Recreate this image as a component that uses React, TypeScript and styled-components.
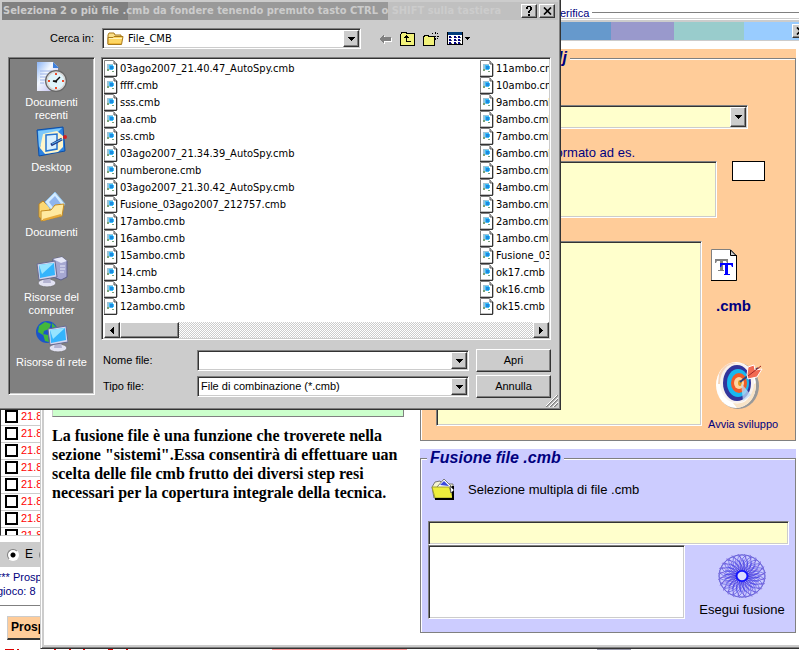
import React from 'react';
import styled, { createGlobalStyle, css } from 'styled-components';

const GlobalStyle = createGlobalStyle`
  *, *::before, *::after { box-sizing: border-box; }
  html, body { margin: 0; padding: 0; background: #fff; }
  body { font-family: "Liberation Sans", Arial, sans-serif; font-size: 11px; line-height: 13px; color: #000; }
  button, input, select, textarea { font: inherit; color: inherit; margin: 0; border-radius: 0; outline: none; }
  svg { display: block; flex: none; }
`;

const sunken = css`
  border: 1px solid;
  border-color: #808080 #fff #fff #808080;
  box-shadow: inset 1px 1px 0 #333, inset -1px -1px 0 #ccc;
`;
const raised = css`
  border: 1px solid;
  border-color: #fff #333 #333 #fff;
  box-shadow: inset -1px -1px 0 #808080;
  background: #ccc;
`;

const Desktop = styled.main`
  position: relative;
  min-height: 100vh;
  overflow: hidden;
  background: #fff;
  display: flex;
  flex-direction: column;
`;

/* ---------- rear window ---------- */
const RearHeading = styled.div`
  display: flex;
  align-items: center;
  gap: 3px;
  height: 17px;
  padding-top: 9px;
  margin-left: calc(100% - 239px);
  color: #000080;
`;
const Rule = styled.span`
  flex: 1;
  height: 2px;
  border-top: 1px solid #808080;
  background: #fff;
`;
const RearLower = styled.section`
  margin-top: auto;
  display: flex;
  flex-direction: column;
`;
const DrawClip = styled.div`
  height: 128px;
  overflow: hidden;
  border-left: 1px solid #333;
  border-bottom: 1px solid #ccc;
`;
const DrawTable = styled.table`
  width: 100%;
  border-collapse: collapse;
  color: #f00;
`;
const DrawCell = styled.td`
  height: 17px;
  padding: 0 0 0 4px;
  border-bottom: 1px solid #ccc;
`;
const DrawLabel = styled.label`
  display: flex;
  align-items: center;
  gap: 3px;
  height: 16px;
`;
const Tick = styled.input`
  appearance: none;
  width: 13px;
  height: 13px;
  border: 2px solid #000;
  background: #fff;
`;
const ChoiceBar = styled.div`
  display: flex;
  align-items: center;
  height: 25px;
  margin-top: 6px;
  padding-left: 7px;
  gap: 6px;
  background: #ccc;
  font-size: 12px;
`;
const ChoiceLabel = styled.label`
  display: flex;
  align-items: center;
  gap: 6px;
`;
const Radio = styled.input`
  appearance: none;
  width: 12px;
  height: 12px;
  border: 1px solid;
  border-color: #808080 #fff #fff #808080;
  border-radius: 50%;
  background: #fff;
  &:checked { background: radial-gradient(#000 2px, #fff 3px); }
`;
const Prospect = styled.p`
  margin: 3px 0 0 -3px;
  padding-bottom: 7px;
  line-height: 14px;
  color: #000080;
  border-bottom: 1px solid #808080;
  white-space: pre-line;
`;
const ProspectTab = styled.button`
  margin: 10px 0 0 7px;
  width: 80px;
  height: 24px;
  padding: 0 3px;
  border: 1px solid;
  border-color: #ccc #333 #333 #ccc;
  border-bottom-width: 2px;
  background: #fc9;
  font-size: 12px;
  font-weight: bold;
  text-align: left;
`;
const Footer = styled.div`
  height: 10px;
  padding: 9px 0 0 5px;
`;

/* ---------- child window ---------- */
const ChildWindow = styled.section`
  position: absolute;
  z-index: 1;
  left: 40px;
  right: 0;
  top: 18px;
  padding: 1px 0 0 1px;
  background: #fff;
  border: 0 solid #ccc;
  border-width: 1px 0 0 1px;
  border-bottom: 1px solid #333;
`;
const ChildFrame = styled.div`
  border: 0 solid #ccc;
  border-width: 2px 0 2px 2px;
  box-shadow: 0 1px 0 #808080;
  margin-bottom: 1px;
`;
const BandRow = styled.div`
  display: flex;
  height: 19px;
  border-bottom: 1px solid #ccc;
  overflow: hidden;
`;
const Band = styled.div<{ $color: string; $width?: number }>`
  flex: ${p => (p.$width ? `0 0 ${p.$width}px` : '1')};
  background: ${p => p.$color};
  display: flex;
  align-items: center;
  justify-content: flex-end;
`;
const SmallButton = styled.button<{ $shift?: number }>`
  ${raised}
  display: flex;
  align-items: center;
  justify-content: center;
  flex: none;
  width: 16px;
  height: 14px;
  padding: 0;
  margin-right: ${p => p.$shift || 0}px;
`;
const ChildBody = styled.div`
  display: grid;
  grid-template-columns: 1fr 1fr;
  padding: 8px 3px 12px 0;
`;
const Notes = styled.div`
  min-width: 0;
  padding: 0 16px 0 8px;
`;
const NoteBox = styled.div`
  height: 368px;
  background: #cfc;
  border: 1px solid #808080;
  border-left-color: #ccc;
`;
const NoteText = styled.p`
  margin: 9px 0 0;
  width: max-content;
  font: bold 16px/19px "Liberation Serif", "Times New Roman", serif;
  white-space: pre-line;
`;
const Panels = styled.div`
  display: flex;
  flex-direction: column;
  gap: 8px;
`;
const Panel = styled.div<{ $color: string }>`
  background: ${p => p.$color};
`;
const Group = styled.fieldset`
  margin: 0;
  padding: 0;
  min-width: 0;
  border: 1px solid #808080;
  box-shadow: inset 1px 1px 0 #fff;
`;
const GroupLegend = styled.legend<{ $color: string }>`
  margin-left: 6px;
  padding: 0 3px;
  height: 18px;
  background: ${p => p.$color};
  font: italic bold 16px/18px "Liberation Sans", Arial, sans-serif;
  color: #000080;
`;
const LegendEnd = styled.span`
  display: block;
  width: 137px;
  text-align: right;
`;
const PathBody = styled.div`
  padding: 38px 0 9px 15px;
  color: #000080;
`;
const FormatLabel = styled.label`
  display: block;
  width: 199px;
  margin-top: 16px;
  line-height: 16px;
  font-size: 13px;
  text-align: right;
`;
const FieldRow = styled.div<{ $gap: number; $top?: number }>`
  display: flex;
  align-items: flex-start;
  gap: ${p => p.$gap}px;
  margin-top: ${p => p.$top || 0}px;
`;
const TextArea = styled.textarea<{ $w: number; $h: number; $tint?: boolean }>`
  ${sunken}
  display: block;
  resize: none;
  width: ${p => p.$w}px;
  height: ${p => p.$h}px;
  padding: 2px 4px;
  background: ${p => (p.$tint ? '#ffc' : '#fff')};
`;
const CodeInput = styled.input`
  width: 33px;
  height: 20px;
  padding: 0 2px;
  border: 1px solid #000;
  background: #fff;
`;
const SideTools = styled.div`
  display: flex;
  flex-direction: column;
  align-items: flex-start;
  padding-top: 8px;
`;
const Extension = styled.span`
  margin: 16px 0 45px 8px;
  font-size: 15px;
  line-height: 18px;
  font-weight: bold;
`;
const DrawingButton = styled.button<{ $inset: number }>`
  display: flex;
  flex-direction: column;
  gap: 7px;
  padding: 0;
  border: 0;
  background: none;
  line-height: 14px;
  > svg { margin-left: ${p => p.$inset}px; }
`;
const MergeBody = styled.div`
  padding: 10px 6px 13px 7px;
`;
const PickButton = styled.button`
  display: flex;
  align-items: center;
  gap: 12px;
  height: 24px;
  padding: 0 0 0 3px;
  margin-bottom: 20px;
  border: 0;
  background: none;
  font-size: 13px;
`;
const PathInput = styled.input`
  ${sunken}
  display: block;
  width: 100%;
  height: 24px;
  padding: 0 4px;
  background: #ffc;
`;
const MergeButton = styled.button`
  flex: 1;
  display: flex;
  flex-direction: column;
  align-items: center;
  gap: 4px;
  padding: 9px 0 0 10px;
  border: 0;
  background: none;
  font-size: 13px;
  line-height: 16px;
  white-space: nowrap;
`;

/* ---------- file dialog ---------- */
const Dialog = styled.section`
  position: absolute;
  z-index: 2;
  left: 0;
  top: 0;
  right: 238px;
  padding: 2px 1px 11px 2px;
  background: #ccc;
  border: 0 solid #333;
  border-width: 0 1px 1px 0;
  box-shadow: inset -1px -1px 0 #808080;
`;
const TitleBar = styled.header`
  display: flex;
  align-items: center;
  gap: 2px;
  height: 18px;
  margin-right: 1px;
  padding: 0 3px 0 1px;
  color: #ccc;
  background: linear-gradient(90deg, #808080 126px, #999 126px, #999 386px, #c0c0c0 386px);
`;
const Title = styled.h1`
  flex: 1;
  min-width: 0;
  margin: 0;
  font: bold 11px/18px "DejaVu Sans Condensed", Tahoma, sans-serif;
  white-space: nowrap;
`;
const LookRow = styled.div`
  display: flex;
  align-items: center;
  margin-top: 8px;
`;
const LookLabel = styled.label`
  width: 92px;
  margin-right: 8px;
  text-align: right;
`;
const Combo = styled.div<{ $w?: number; $h?: number; $tint?: boolean }>`
  ${sunken}
  display: flex;
  align-items: center;
  width: ${p => (p.$w ? `${p.$w}px` : '100%')};
  height: ${p => p.$h || 21}px;
  padding: 1px 1px 1px 2px;
  background: ${p => (p.$tint ? '#ffc' : '#fff')};
`;
const comboText = css`
  appearance: none;
  flex: 1;
  min-width: 0;
  height: 100%;
  padding: 0 0 0 1px;
  border: 0;
  background: transparent;
`;
const ComboSelect = styled.select`
  ${comboText}
`;
const FolderSelect = styled.select`
  ${comboText}
  padding-left: 4px;
  font-family: "DejaVu Sans Condensed", Tahoma, sans-serif;
`;
const ComboInput = styled.input`
  ${comboText}
`;
const LookIcon = styled.span`
  padding-left: 2px;
`;
const ArrowBox = styled.span`
  ${raised}
  display: flex;
  align-items: center;
  justify-content: center;
  flex: none;
  width: 16px;
  height: 100%;
`;
const Tools = styled.div`
  display: flex;
  gap: 7px;
  margin-left: 16px;
`;
const ToolButton = styled.button`
  display: block;
  padding: 0;
  border: 0;
  background: none;
`;
const DialogMain = styled.div`
  display: flex;
  align-items: flex-start;
  gap: 6px;
  margin-top: 8px;
  padding: 0 8px 0 6px;
`;
const Places = styled.nav`
  ${sunken}
  flex: none;
  display: flex;
  flex-direction: column;
  width: 87px;
  height: 338px;
  padding-top: 3px;
  background: #808080;
`;
const Place = styled.button`
  display: flex;
  flex-direction: column;
  align-items: center;
  gap: 3px;
  height: 65px;
  padding: 0;
  border: 0;
  background: none;
  color: #fff;
  line-height: 13px;
  white-space: pre-line;
`;
const DialogWork = styled.div`
  flex: 1;
  min-width: 0;
`;
const ListFrame = styled.div`
  ${sunken}
  padding: 2px 1px 1px 2px;
  background: #fff;
`;
const FileList = styled.ul`
  display: grid;
  grid-template-rows: repeat(15, 17px);
  grid-auto-flow: column;
  grid-template-columns: 376px 1fr;
  height: 262px;
  margin: 0;
  padding: 0;
  list-style: none;
  overflow: hidden;
  font: 11px/17px "DejaVu Sans Condensed", Tahoma, sans-serif;
`;
const FileItem = styled.li`
  display: flex;
  align-items: center;
  gap: 2px;
  min-width: 0;
  white-space: nowrap;
`;
const ScrollTrack = styled.div`
  display: flex;
  height: 16px;
  background: repeating-conic-gradient(#ccc 0 25%, #fff 0 50%) 0 0 / 2px 2px;
`;
const ScrollArrow = styled.button`
  ${raised}
  display: flex;
  align-items: center;
  justify-content: center;
  width: 16px;
  padding: 0;
`;
const ScrollThumb = styled.span`
  ${raised}
  width: 59px;
  margin-right: auto;
`;
const NameForm = styled.form`
  display: grid;
  grid-template-columns: 94px 1fr 75px;
  grid-auto-rows: 23px;
  align-items: center;
  row-gap: 3px;
  margin-top: 9px;
  padding-left: 2px;
`;
const DialogButton = styled.button`
  ${raised}
  height: 23px;
  padding: 0;
`;
const ComboCell = styled.div`
  padding-right: 7px;
`;
const Grip = styled.svg`
  position: absolute;
  right: 2px;
  bottom: 2px;
`;

/* ---------- drawings ---------- */
const Down = () => (
  <svg width="7" height="4" viewBox="0 0 7 4" shapeRendering="crispEdges"><path d="M0 0h7v1H6v1H5v1H4v1H3V3H2V2H1V1H0z" /></svg>
);
const Side = ({ flip }: { flip?: boolean }) => (
  <svg width="4" height="7" viewBox="0 0 4 7" shapeRendering="crispEdges"><path d={flip ? 'M0 0h1v1h1v1h1v1h1v1H3v1H2v1H1v1H0z' : 'M4 0H3v1H2v1H1v1H0v1h1v1h1v1h1v1h1z'} /></svg>
);
const Cross = () => (
  <svg width="9" height="8" viewBox="0 0 9 8"><path d="M1 0.5 8 7.5M8 0.5 1 7.5" stroke="#000" strokeWidth="1.7" /></svg>
);
const Question = () => (
  <svg width="8" height="10" viewBox="0 0 8 10" shapeRendering="crispEdges"><path d="M1 1h1V0h4v1h1v3H6v1H5v2H3V5h1V4h1V1H3v2H1zM3 8h2v2H3z" /></svg>
);
const FileIcon = () => (
  <svg width="14" height="17" viewBox="0 0 14 17">
    <path d="M.5.5h9l3.500 3.500v12H.5z" fill="#fff" stroke="#808080" />
    <path d="M10 1v3h3" fill="#ccc" stroke="#555" />
    <path d="M12.500 4v12.500H0" fill="none" stroke="#333" />
    <path d="M3 4h6v6H3z" fill="#9cc4d8" />
    <path d="M5 5h4v1h1v3H9v1H6V9H5z" fill="#3ac0fa" />
    <path d="M6 6h3v3H6z" fill="#1e88dd" />
    <path d="M3 11h2V9H3zM8 11h2v1H8z" fill="#7aa37a" />
  </svg>
);
const FolderIcon = () => (
  <svg width="17" height="14" viewBox="0 0 17 14">
    <path d="M1 12V3l1-2h5l1 2h6v3" fill="#fbe08a" stroke="#a8791b" />
    <path d="M1 12.500V5.500h5l1-1h9l-1.500 8z" fill="#fdd663" stroke="#a8791b" />
    <path d="M2 6.500h13" stroke="#fff3bd" />
    <path d="M2 11.500h12" stroke="#f0b93a" />
  </svg>
);
const BackArrow = () => (
  <svg width="16" height="16" viewBox="0 0 16 16" shapeRendering="crispEdges">
    <path d="M3 9 8 4v3h7v4H8v3z" fill="#fff" />
    <path d="M2 8 7 3v3h7v4H7v3z" fill="#808080" />
  </svg>
);
const UpFolder = () => (
  <svg width="16" height="16" viewBox="0 0 16 16" shapeRendering="crispEdges">
    <path d="M.5 14.500v-11l1-1v-1h5v1h8v12z" fill="#f2f27a" stroke="#000" />
    <path d="M4 6h5v1H4zM5 5h3v1H5zM6 4h1v7H6zM6 10h5v1H6z" fill="#000" />
  </svg>
);
const NewFolder = () => (
  <svg width="17" height="16" viewBox="0 0 17 16" shapeRendering="crispEdges">
    <path d="M.5 14.500v-9h1v-1h4v1h6v9z" fill="#f2f27a" stroke="#000" />
    <path d="M12 1v2M12 7v2M8 5h2M14 5h2M9 2l1 1M14 3l1-1M14 7l1 1M12 5h1" stroke="#000" />
  </svg>
);
const ViewIcon = () => (
  <svg width="24" height="16" viewBox="0 0 24 16" shapeRendering="crispEdges">
    <path d="M.5 1.500h15v12H.5z" fill="#fff" stroke="#000" />
    <path d="M1 1h14v3H1z" fill="#003a7a" />
    <path d="M2 5h2v2H2zM7 5h2v2H7zM11 5h2v2h-2zM2 8h2v2H2zM7 8h2v2H7zM11 8h2v2h-2zM2 11h2v2H2zM7 11h2v2H7zM11 11h2v2h-2z" fill="#000080" />
    <path d="M4 6h1v1H4zM9 6h1v1H9zM13 6h1v1h-1zM4 9h1v1H4zM9 9h1v1H9zM13 9h1v1h-1zM4 12h1v1H4zM9 12h1v1H9zM13 12h1v1h-1z" fill="#555" />
    <path d="M18 6h5v1h-1v1h-1v1h-1V8h-1V7h-1z" />
  </svg>
);
const RecentIcon = () => (
  <svg width="32" height="32" viewBox="0 0 32 32">
    <defs><linearGradient id="paper" x2="1" y2="1"><stop stopColor="#8ab4f6" /><stop offset=".4" stopColor="#f3f8ff" /><stop offset="1" stopColor="#b9b4ee" /></linearGradient></defs>
    <path d="M1 1h16l5 5v24H1z" fill="url(#paper)" />
    <path d="M17 1v6h6z" fill="#3d7fdc" />
    <path d="M4 10h12M4 13h8M4 16h6M4 19h5M4 22h4" stroke="#9cb2e8" />
    <circle cx="20" cy="20" r="10" fill="#dff4fb" stroke="#666" strokeWidth="2" />
    <circle cx="20" cy="20" r="9" fill="none" stroke="#d8d8d8" strokeWidth="1.500" />
    <path d="M20 20l4-4M20 20h-3l4 1" stroke="#111" strokeWidth="1.500" />
    <path d="M20 12v2M20 26v2M12 20h2M26 20h2" stroke="#f04a2a" strokeWidth="2" />
  </svg>
);
const DesktopIcon = () => (
  <svg width="32" height="32" viewBox="0 0 32 32">
    <path d="M1 4 27 1l2 24-26 5z" fill="#2d83e2" stroke="#0c4fa8" />
    <path d="M2 5 26 2l-6 6-9 0L3 22z" fill="#7cc8fa" />
    <path d="M7 8l14-3 6 5v11l-5 5-13 2-5-6z" fill="#fff6c9" />
    <path d="M10 9l11-1v15l-11 2z" fill="#d9f1ff" stroke="#2472ce" strokeWidth="1.500" />
    <path d="M15 19l11-6" stroke="#223a86" strokeWidth="3" />
    <path d="M16 18l10-5" stroke="#5cbaf4" />
    <circle cx="29" cy="11" r="2" fill="#d41f1f" />
  </svg>
);
const DocumentsIcon = () => (
  <svg width="32" height="32" viewBox="0 0 32 32">
    <path d="M3 13l4-3 3 3 5 3-7 14-5-4z" fill="#fbd873" stroke="#b98323" />
    <path d="M9 11 19 1l10 12-9 12z" fill="#d2ebff" stroke="#8fc0ea" />
    <path d="M13 11l6-6 6 8-6 6z" fill="#8fb5ee" />
    <path d="M5 30V20l10-1 4-5 9-1-2 12z" fill="#ffe9a0" stroke="#c58b21" />
    <path d="M7 29 25 24" stroke="#e6a93a" strokeWidth="2" />
  </svg>
);
const Screen = ({ x, y }: { x: number; y: number }) => (
  <g transform={`translate(${x} ${y})`}>
    <ellipse cx="11" cy="23" rx="9" ry="4" fill="#e2e2f2" stroke="#777" />
    <path d="M8 17h6l1 6H7z" fill="#b4b4d2" />
    <path d="M1 4 19 1l2 16-18 3z" fill="#d4d6ee" stroke="#676a90" />
    <path d="M3 5 18 3l1 12-15 3z" fill="#34b4fc" />
    <path d="M3 5 18 3 6 14z" fill="#96e4ff" />
  </g>
);
const ComputerIcon = () => (
  <svg width="32" height="32" viewBox="0 0 32 32">
    <path d="M17 3l9-2 5 4v16l-6 3-8-3z" fill="#a6a8d2" stroke="#5b5d88" />
    <path d="M17 3l9-2 5 4-6 2z" fill="#e6e8f8" />
    <path d="M24 10h5M24 13h5M24 16h4" stroke="#e8eafa" />
    <Screen x={0} y={4} />
  </svg>
);
const NetworkIcon = () => (
  <svg width="32" height="32" viewBox="0 0 32 32">
    <circle cx="11" cy="11" r="11" fill="#1b55c8" />
    <path d="M3 5l6-4 6 2-2 5-5 2-1 4-5-3zM7 13l5 1 1 7-4-1zM16 2l4 4-4 1z" fill="#43b73a" />
    <Screen x={11} y={4} />
  </svg>
);
const FontFile = () => (
  <svg width="27" height="32" viewBox="0 0 27 32">
    <path d="M.5.5h19l6 6v25H.5z" fill="#fff" stroke="#808080" />
    <path d="M19.500 1v5.500H25z" fill="#ccc" stroke="#000" />
    <path d="M25.500 6v25.500H0" fill="none" stroke="#000" />
    <path d="M4 10h13v4h-1l-1-2h-3v9h1v1H7v-1h2v-9H6l-1 2H4z" fill="#808080" />
    <path d="M9 14h13v4h-1l-1-2h-3v9h2v1h-6v-1h1v-9h-3l-1 2H9z" fill="#00f" />
  </svg>
);
const TargetIcon = () => (
  <svg width="48" height="50" viewBox="0 0 48 50">
    <ellipse cx="22" cy="26" rx="21" ry="23" fill="#999" />
    <ellipse cx="20" cy="25" rx="20" ry="23" fill="#fff" />
    <path d="M3 14Q9 1 21 3l5 9H11L8 24H2z" fill="#f6d5ba" />
    <path d="M17 43q18 3 19-18l4-2q0 22-19 25z" fill="#f8e4c8" />
    <ellipse cx="21" cy="23" rx="17" ry="20" fill="#f7f1ee" />
    <ellipse cx="21" cy="23" rx="14" ry="18" fill="#31349b" />
    <ellipse cx="22" cy="23" rx="11" ry="14" fill="#18b7ee" />
    <ellipse cx="23" cy="23" rx="8" ry="10" fill="#f25a27" />
    <ellipse cx="23" cy="23" rx="5" ry="6" fill="#ffd6a0" />
    <ellipse cx="24" cy="23" rx="2" ry="3" fill="#e59a20" />
    <path d="M25 23 35 35l-8 6z" fill="#bcd9f5" opacity=".75" />
    <path d="M24 22 42 8" stroke="#30457e" strokeWidth="2" />
    <path d="M31 15l1-8 6-2 1 5 7-1-5 8-9 2z" fill="#f26a52" stroke="#fff" />
    <path d="M32 16 45 6" stroke="#a02525" />
  </svg>
);
const OpenFolder = () => (
  <svg width="25" height="23" viewBox="0 0 25 23">
    <path d="M3 20 1 9l3-5 5-1 3 3h10v14z" fill="#f4f4d0" stroke="#777" />
    <path d="M6 9 13 1l9 9-4 5z" fill="#fff" stroke="#777" />
    <path d="M9 7l4-4 5 5z" fill="#3b49dc" />
    <path d="M1 9h17l4 11H4z" fill="#eeee3c" stroke="#a0a030" />
    <path d="M4 21h18V8" fill="none" stroke="#000" strokeWidth="2" />
    <path d="M19 8l4 4-3 3z" fill="#fff" stroke="#555" />
  </svg>
);
const petals = Array.from({ length: 24 }, (_, i) => i * 15);
const Rosette = () => (
  <svg width="48" height="44" viewBox="-24 -22 48 44">
    <g fill="none" stroke="#4a46d8" strokeWidth=".6" transform="scale(1 .92)">
      {petals.map(a => <ellipse key={a} cx="14" cy="0" rx="9" ry="5" transform={`rotate(${a})`} />)}
      {petals.map(a => <path key={`s${a}`} d="M5 0Q11 1 15 6T23 8" stroke="#6a4ad8" transform={`rotate(${a})`} />)}
      {petals.map(a => <path key={`t${a}`} d="M5 0Q12-3 16-8" stroke="#2c2ce8" transform={`rotate(${a})`} />)}
      <circle r="23" strokeWidth="1" stroke="#6d67d8" />
      <circle r="5.500" stroke="#1414ff" strokeWidth="2" fill="#dcdcff" />
    </g>
  </svg>
);

const files = [
  '03ago2007_21.40.47_AutoSpy.cmb', 'ffff.cmb', 'sss.cmb', 'aa.cmb', 'ss.cmb',
  '03ago2007_21.34.39_AutoSpy.cmb', 'numberone.cmb', '03ago2007_21.30.42_AutoSpy.cmb',
  'Fusione_03ago2007_212757.cmb', '17ambo.cmb', '16ambo.cmb', '15ambo.cmb', '14.cmb',
  '13ambo.cmb', '12ambo.cmb', '11ambo.cmb', '10ambo.cmb', '9ambo.cmb', '8ambo.cmb',
  '7ambo.cmb', '6ambo.cmb', '5ambo.cmb', '4ambo.cmb', '3ambo.cmb', '2ambo.cmb',
  '1ambo.cmb', 'Fusione_03', 'ok17.cmb', 'ok16.cmb', 'ok15.cmb',
];
const places = [
  { label: 'Documenti\nrecenti', icon: <RecentIcon /> },
  { label: 'Desktop', icon: <DesktopIcon /> },
  { label: 'Documenti', icon: <DocumentsIcon /> },
  { label: 'Risorse del\ncomputer', icon: <ComputerIcon /> },
  { label: 'Risorse di rete', icon: <NetworkIcon /> },
];
const rows = Array.from({ length: 8 }, (_, i) => i);

export default function App() {
  return (
    <Desktop>
      <GlobalStyle />
      <RearHeading>erifica<Rule /></RearHeading>
      <RearLower>
        <DrawClip>
          <DrawTable>
            <tbody>
              {rows.map(r => (
                <tr key={r}><DrawCell><DrawLabel><Tick type="checkbox" />21.8</DrawLabel></DrawCell></tr>
              ))}
            </tbody>
          </DrawTable>
        </DrawClip>
        <ChoiceBar>
          <ChoiceLabel><Radio type="radio" name="mode" defaultChecked />E</ChoiceLabel>
          <Radio type="radio" name="mode" aria-label="Altro" />
        </ChoiceBar>
        <Prospect>{'*** Prosp\ngioco: 8'}</Prospect>
        <ProspectTab>Prosp</ProspectTab>
        <Footer>
          <svg width="640" height="1" viewBox="0 0 640 1" shapeRendering="crispEdges">
            <path d="M0 0h9v1H0zM12 0h2v1h-2zM49 0h2v1h-2zM64 0h2v1h-2zM78 0h2v1h-2zM103 0h5v1h-5zM121 0h2v1h-2z" fill="#d00" />
            <path d="M267 0h135v1H267z" fill="#f99" />
            <path d="M592 0h34v1h-34z" fill="#99a" />
          </svg>
        </Footer>
      </RearLower>

      <ChildWindow>
        <ChildFrame>
          <BandRow>
            <Band $color="#69c" />
            <Band $color="#99c" $width={63} />
            <Band $color="#9cc" $width={70} />
            <Band $color="#9cf" $width={55}>
              <SmallButton $shift={-9} aria-label="Chiudi"><Cross /></SmallButton>
            </Band>
          </BandRow>
          <ChildBody>
            <Notes>
              <NoteBox />
              <NoteText>{'La fusione file è una funzione che troverete nella\nsezione "sistemi".Essa consentirà di effettuare uan\nscelta delle file cmb frutto dei diversi step resi\nnecessari per la copertura integrale della tecnica.'}</NoteText>
            </Notes>
            <Panels>
              <Panel $color="#fc9">
                <Group>
                  <GroupLegend $color="#fc9"><LegendEnd>lj</LegendEnd></GroupLegend>
                  <PathBody>
                    <Combo $w={312} $h={24} $tint>
                      <ComboSelect aria-label="Percorso" />
                      <ArrowBox><Down /></ArrowBox>
                    </Combo>
                    <FormatLabel htmlFor="format">formato ad es.</FormatLabel>
                    <FieldRow $gap={15}>
                      <TextArea id="format" $w={281} $h={57} $tint />
                      <CodeInput aria-label="Codice" />
                    </FieldRow>
                    <FieldRow $gap={6} $top={23}>
                      <TextArea aria-label="Elenco" $w={266} $h={185} $tint />
                      <SideTools>
                        <DrawingButton $inset={3} aria-label="Font"><FontFile /></DrawingButton>
                        <Extension>.cmb</Extension>
                        <DrawingButton $inset={8}><TargetIcon />Avvia sviluppo</DrawingButton>
                      </SideTools>
                    </FieldRow>
                  </PathBody>
                </Group>
              </Panel>
              <Panel $color="#ccf">
                <Group>
                  <GroupLegend $color="#ccf">Fusione file .cmb</GroupLegend>
                  <MergeBody>
                    <PickButton><OpenFolder />Selezione multipla di file .cmb</PickButton>
                    <PathInput aria-label="File selezionati" />
                    <FieldRow $gap={0}>
                      <TextArea aria-label="Risultato" $w={257} $h={74} />
                      <MergeButton><Rosette />Esegui fusione</MergeButton>
                    </FieldRow>
                  </MergeBody>
                </Group>
              </Panel>
            </Panels>
          </ChildBody>
        </ChildFrame>
      </ChildWindow>

      <Dialog role="dialog" aria-labelledby="dialog-title">
        <TitleBar>
          <Title id="dialog-title">Seleziona 2 o più file .cmb da fondere tenendo premuto tasto CTRL o SHIFT sulla tastiera</Title>
          <SmallButton aria-label="Guida"><Question /></SmallButton>
          <SmallButton aria-label="Chiudi"><Cross /></SmallButton>
        </TitleBar>
        <LookRow>
          <LookLabel htmlFor="look">Cerca in:</LookLabel>
          <Combo $w={259}>
            <LookIcon><FolderIcon /></LookIcon>
            <FolderSelect id="look"><option>File_CMB</option></FolderSelect>
            <ArrowBox><Down /></ArrowBox>
          </Combo>
          <Tools>
            <ToolButton aria-label="Indietro"><BackArrow /></ToolButton>
            <ToolButton aria-label="Livello superiore"><UpFolder /></ToolButton>
            <ToolButton aria-label="Nuova cartella"><NewFolder /></ToolButton>
            <ToolButton aria-label="Visualizza"><ViewIcon /></ToolButton>
          </Tools>
        </LookRow>
        <DialogMain>
          <Places>
            {places.map(p => <Place key={p.label}>{p.icon}{p.label}</Place>)}
          </Places>
          <DialogWork>
            <ListFrame>
              <FileList>
                {files.map(f => <FileItem key={f}><FileIcon />{f}</FileItem>)}
              </FileList>
              <ScrollTrack>
                <ScrollArrow aria-label="Scorri a sinistra"><Side /></ScrollArrow>
                <ScrollThumb />
                <ScrollArrow aria-label="Scorri a destra"><Side flip /></ScrollArrow>
              </ScrollTrack>
            </ListFrame>
            <NameForm onSubmit={e => e.preventDefault()}>
              <label htmlFor="name">Nome file:</label>
              <ComboCell><Combo><ComboInput id="name" /><ArrowBox><Down /></ArrowBox></Combo></ComboCell>
              <DialogButton>Apri</DialogButton>
              <label htmlFor="type">Tipo file:</label>
              <ComboCell>
                <Combo>
                  <ComboSelect id="type"><option>File di combinazione (*.cmb)</option></ComboSelect>
                  <ArrowBox><Down /></ArrowBox>
                </Combo>
              </ComboCell>
              <DialogButton type="button">Annulla</DialogButton>
            </NameForm>
          </DialogWork>
        </DialogMain>
        <Grip width="12" height="12" viewBox="0 0 12 12">
          <path d="M0 12 12 0M4 12l8-8M8 12l4-4" stroke="#808080" strokeWidth="1.500" />
          <path d="M-1 12 12-1M3 12l9-9M7 12l5-5" stroke="#fff" />
        </Grip>
      </Dialog>
    </Desktop>
  );
}
